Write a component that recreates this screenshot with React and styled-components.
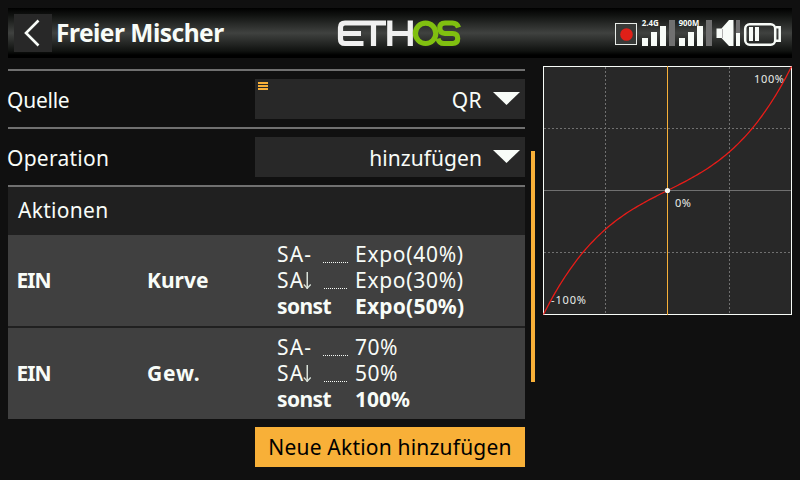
import React from "react";
import styled, { createGlobalStyle } from "styled-components";

const GlobalStyle = createGlobalStyle`
  * { box-sizing: border-box; }
  body { margin: 0; background: #101010; }
`;

const Screen = styled.div`
  width: 800px;
  height: 480px;
  padding: 8px;
  overflow: hidden;
  background: #101010;
  color: #f8fcf8;
  font-family: "Noto Sans", sans-serif;
`;

const Header = styled.header`
  display: grid;
  grid-template-columns: 323px 1fr auto;
  align-items: center;
  width: 784px;
  height: 50px;
  padding: 0 9px 0 6px;
  background: linear-gradient(#000 0%, #101210 14%, #404240 50%, #383a38 56%, #101210 86%, #000 94%);
`;

const TitleGroup = styled.div`
  display: flex;
  align-items: center;
  gap: 4px;
`;

const BackButton = styled.button`
  width: 38px;
  height: 38px;
  padding: 0;
  border: 0;
  background: #282828;
  svg { display: block; }
`;

const Title = styled.h1`
  margin: 0;
  font-size: 24.5px;
  line-height: 38px;
  font-weight: 700;
  letter-spacing: -0.5px;
  white-space: nowrap;
`;

const Content = styled.main`
  display: flex;
  align-items: flex-start;
  padding-top: 8px;
`;

const Form = styled.section`
  width: 517px;
  padding-top: 3px;
`;

const Field = styled.div`
  display: grid;
  grid-template-columns: 247px 270px;
  align-items: center;
  height: 58px;
  border-top: 2px solid #707070;
`;

const Label = styled.span`
  margin-left: ${(p) => p.$shift || "0px"};
  font-size: 21px;
  line-height: 40px;
  font-weight: ${(p) => (p.$bold ? 700 : 400)};
  letter-spacing: ${(p) => p.$track || "0px"};
  white-space: pre;
`;

const FieldLabel = styled(Label)`
  padding-top: 1px;
`;

const Arrow = styled.svg`
  display: inline-block;
  margin-left: -1px;
  vertical-align: -1px;
`;

const Select = styled.div`
  position: relative;
  display: flex;
  align-items: center;
  justify-content: flex-end;
  gap: 11px;
  height: 40px;
  padding-right: 5px;
  background: #282828;
`;

const MenuMark = styled.svg`
  position: absolute;
  left: 3px;
  top: 3px;
`;

const Caret = styled.svg`
  display: block;
  margin-bottom: 1px;
`;

const SectionTitle = styled.div`
  height: 50px;
  padding: 3px 0 0 10px;
  border-top: 2px solid #707070;
  background: #202020;
`;

const Actions = styled.div`
  display: grid;
  gap: 2px;
  background: #202020;
`;

const Action = styled.div`
  display: grid;
  grid-template-columns: 130px 130px 1fr;
  align-items: center;
  height: 91px;
  padding-left: 9px;
  background: #404040;
  ${Label} { padding-bottom: 1px; }
`;

const Conditions = styled.div`
  display: grid;
  grid-template-rows: repeat(3, 26px);
  padding-top: 1px;
`;

const Condition = styled.div`
  display: grid;
  grid-template-columns: 46px 32px 1fr;
  grid-template-rows: 26px;
  align-items: center;
  height: 26px;
  ${Label} { line-height: 24px; padding-bottom: 2px; }
`;

const Dots = styled.i`
  align-self: end;
  width: ${(p) => p.$width}px;
  height: 1px;
  margin-left: ${(p) => p.$inset}px;
  margin-bottom: 5px;
  background: repeating-linear-gradient(90deg, #f8fcf8 0 1px, #404040 1px 2px);
`;

const AddButton = styled.button`
  display: block;
  width: 270px;
  height: 40px;
  margin: 8px 0 0 auto;
  padding: 0;
  border: 0;
  background: #f8b038;
  color: #000;
  font-family: inherit;
`;

const ScrollThumb = styled.div`
  width: 4px;
  height: 231px;
  margin: 85px 8px 0 6px;
  background: #f8b038;
`;

const Chart = styled.svg`
  display: block;
  font-family: "Noto Sans", sans-serif;
`;

const expo = Array.from({ length: 125 }, (_, i) => {
  const x = i / 62 - 1;
  const y = 0.5 * x ** 3 + 0.5 * x;
  return `${(124.5 + x * 124).toFixed(2)},${(124.5 - y * 124).toFixed(2)}`;
}).join(" ");

const actions = [
  {
    name: "Kurve",
    nameTrack: "0px",
    rows: [
      { key: "SA-", value: "Expo(40%)", inset: 0, width: 25, keyTrack: "1.2px", track: "0.7px" },
      { key: "SA", arrow: true, value: "Expo(30%)", inset: 1, width: 24, keyTrack: "1.2px", track: "0.7px" },
      { key: "sonst", value: "Expo(50%)", bold: true, keyTrack: "-0.6px", track: "0.2px" },
    ],
  },
  {
    name: "Gew.",
    nameTrack: "0.8px",
    rows: [
      { key: "SA-", value: "70%", inset: 0, width: 25, keyTrack: "1.2px", track: "0.5px" },
      { key: "SA", arrow: true, value: "50%", inset: 1, width: 24, keyTrack: "1.2px", track: "0.5px" },
      { key: "sonst", value: "100%", bold: true, keyTrack: "-0.6px", track: "0px" },
    ],
  },
];

function DownArrow() {
  return (
    <Arrow width="8" height="17" role="img" aria-label="unten">
      <path d="M3.500 0h1.500v17h-1.500z" fill="#d8e0d8" />
      <path d="M0.800 12.500L4.250 16.200 7.700 12.500" fill="none" stroke="#d8e0d8" strokeWidth="1.300" />
    </Arrow>
  );
}

function Logo() {
  return (
    <svg width="126" height="30" viewBox="337 18 126 30" fill="none" strokeWidth="5.2">
      <path stroke="#f0f0f0" d="M386 23H345Q340.500 23 340.500 27.500V39Q340.500 43.500 345 43.500H363.500M340.500 33.500H361M373.500 23V46M389.800 20.400V46M410.300 20.400V46M389.800 33.500H410.300" />
      <g stroke="#80c010">
        <ellipse cx="425.600" cy="33.300" rx="10.200" ry="10.200" />
        <path d="M458.500 27.500Q457 23 452.500 23H445Q439.800 23 439.800 28T445 33.500H452.500Q457.700 33.500 457.700 38.500T452.500 43.500H444Q439 43.500 438 38.500" />
      </g>
    </svg>
  );
}

function Status() {
  return (
    <svg width="170" height="30" viewBox="613 18 170 30" fontFamily="Open Sans, sans-serif" fontSize="8" fontWeight="700">
      <rect x="615.500" y="23.500" width="21" height="21" fill="#383a38" stroke="#e8ece8" />
      <circle cx="626.500" cy="34.500" r="6.300" fill="#e02018" />
      <path d="M669 20h6v26h-6zM706 20h6v26h-6zM736 20h4v13h-4z" fill="#707070" />
      <g fill="#f8fcf8">
        <path d="M642 38h6v8h-6zM651 32h6v14h-6zM660 26h6v20h-6zM679 38h6v8h-6zM688 32h6v14h-6zM697 26h6v20h-6zM736 33h4v13h-4z" />
        <path d="M716.500 28.500h5L729 20h4.500v26H729l-7.500-8h-5z" />
        <path d="M749 27h4v14h-4zM755 27h4v14h-4z" />
        <text x="641.700" y="26" textLength="17" lengthAdjust="spacingAndGlyphs">2.4G</text>
        <text x="678.700" y="26" textLength="20.500" lengthAdjust="spacingAndGlyphs">900M</text>
      </g>
      <path d="M722.500 29v9" stroke="#b0b0b0" />
      <g fill="none" stroke="#f8fcf8" strokeWidth="2.500">
        <rect x="745.200" y="24.200" width="30" height="20.500" rx="4.500" />
        <path d="M776 27.200h3.700v13.600h-3.700" />
      </g>
    </svg>
  );
}

function SelectField({ label, value, track, valueTrack, marked }) {
  return (
    <Field>
      <FieldLabel $shift="-1px" $track={track}>{label}</FieldLabel>
      <Select>
        {marked && (
          <MenuMark width="10" height="8">
            <path d="M0 1h10M0 4h10M0 7h10" stroke="#f8b038" strokeWidth="2" />
          </MenuMark>
        )}
        <FieldLabel $track={valueTrack}>{value}</FieldLabel>
        <Caret width="27" height="13"><path d="M0 0h27L13.500 13z" fill="#f8fcf8" /></Caret>
      </Select>
    </Field>
  );
}

export default function App() {
  return (
    <>
      <GlobalStyle />
      <Screen>
        <Header>
          <TitleGroup>
            <BackButton aria-label="Zurück">
              <svg width="38" height="38"><path d="M24.500 6.500L12 19l12.500 12.500" fill="none" stroke="#f8fcf8" strokeWidth="2.600" /></svg>
            </BackButton>
            <Title>Freier Mischer</Title>
          </TitleGroup>
          <Logo />
          <Status />
        </Header>
        <Content>
          <Form>
            <SelectField label="Quelle" value="QR" track="-0.25px" valueTrack="0.4px" marked />
            <SelectField label="Operation" value="hinzufügen" track="0.25px" valueTrack="0.05px" />
            <SectionTitle><Label $track="0.3px">Aktionen</Label></SectionTitle>
            <Actions>
              {actions.map((a) => (
                <Action key={a.name}>
                  <Label $bold $shift="-0.5px" $track="-1px">EIN</Label>
                  <Label $bold $track={a.nameTrack}>{a.name}</Label>
                  <Conditions>
                    {a.rows.map((r) => (
                      <Condition key={r.key + r.value}>
                        <Label $bold={r.bold} $track={r.keyTrack}>{r.key}{r.arrow && <DownArrow />}</Label>
                        {r.width ? <Dots $inset={r.inset} $width={r.width} /> : <span />}
                        <Label $bold={r.bold} $track={r.track}>{r.value}</Label>
                      </Condition>
                    ))}
                  </Conditions>
                </Action>
              ))}
            </Actions>
            <AddButton><Label $track="0.2px">Neue Aktion hinzufügen</Label></AddButton>
          </Form>
          <ScrollThumb />
          <Chart width="249" height="249" viewBox="0 0 249 249">
            <rect x="0.500" y="0.500" width="248" height="248" fill="#282828" stroke="#f8fcf8" />
            <path d="M62.500 1v247M186.500 1v247M1 62.500h247M1 186.500h247" stroke="#707070" strokeDasharray="2 2" />
            <path d="M1 124.500h247" stroke="#707070" />
            <path d="M124.500 0v249" stroke="#f8b038" />
            <g fill="#e8ece8" fontSize="11">
              <text x="211" y="17" textLength="30">100%</text>
              <text x="132" y="141" textLength="16">0%</text>
              <text x="8" y="238" textLength="35">-100%</text>
            </g>
            <polyline points={expo} fill="none" stroke="#e81c18" strokeWidth="1.300" />
            <circle cx="124.500" cy="124.500" r="2.600" fill="#f8fcf8" />
          </Chart>
        </Content>
      </Screen>
    </>
  );
}
